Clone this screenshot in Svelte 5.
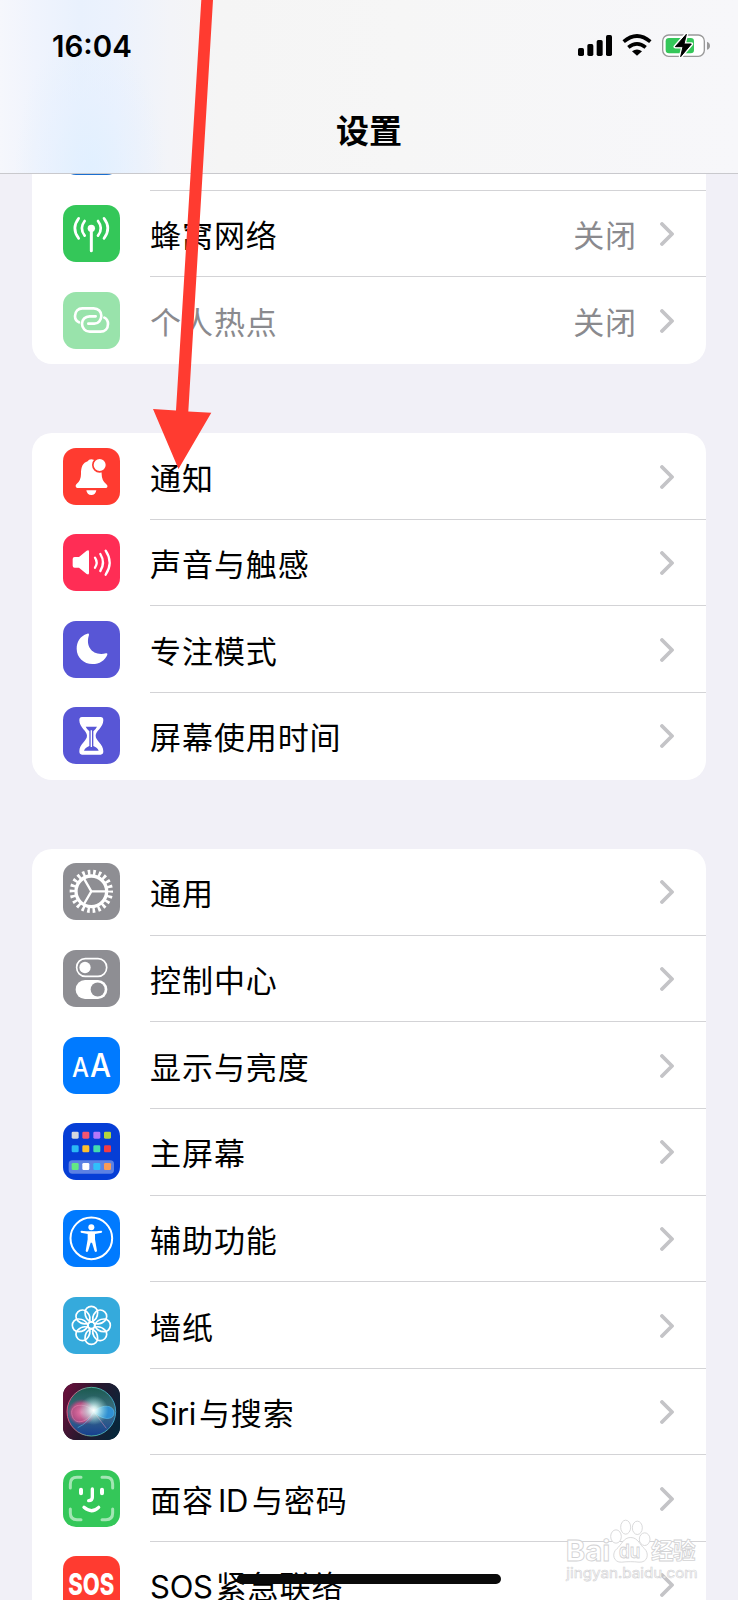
<script lang="ts">
  type Row = { icon: string; label: string; color: string; value?: string; disabled?: boolean }

  const groups: Row[][] = [
    [
      { icon: 'bluetooth', label: '', color: '#1a6fd0' },
      { icon: 'cellular', label: '蜂窝网络', color: '#34c759', value: '关闭' },
      { icon: 'hotspot', label: '个人热点', color: '#34c759', value: '关闭', disabled: true },
    ],
    [
      { icon: 'bell', label: '通知', color: '#ff3b30' },
      { icon: 'sound', label: '声音与触感', color: '#ff2d55' },
      { icon: 'moon', label: '专注模式', color: '#5856d6' },
      { icon: 'hourglass', label: '屏幕使用时间', color: '#5856d6' },
    ],
    [
      { icon: 'gear', label: '通用', color: '#8e8e93' },
      { icon: 'toggles', label: '控制中心', color: '#8e8e93' },
      { icon: 'display', label: '显示与亮度', color: '#007aff' },
      { icon: 'home', label: '主屏幕', color: '#063ed6' },
      { icon: 'access', label: '辅助功能', color: '#007aff' },
      { icon: 'flower', label: '墙纸', color: '#35aadc' },
      { icon: 'siri', label: 'Siri与搜索', color: '#20182f' },
      { icon: 'face', label: '面容ID与密码', color: '#34c759' },
      { icon: 'sos', label: 'SOS紧急联络', color: '#ff3b30' },
    ],
  ]

  const apps = [
    ['#d5d6de', '#f45571', '#b377fa', '#b1d63f'],
    ['#2ab8f5', '#fdc02f', '#43dcae', '#f33b45'],
    ['#63e983', '#ffffff', '#31c0fa', '#fb9b55'],
  ]
  const appX = [26, 58, 91, 123]
  const appY = [26, 67, 120]
  const petals = [0, 45, 90, 135, 180, 225, 270, 315]

  // splits "Siri与搜索" into latin and CJK runs so each gets its own spacing
  const runs = (s: string) => s.match(/[A-Za-z]+|[^A-Za-z]+/g) ?? []
</script>

<div class="screen">
  <header>
    <div class="status">
      <span class="time">16:04</span>
      <svg class="indicators" viewBox="0 0 396 75">
        <rect x="0" y="45" width="18" height="24" rx="5" />
        <rect x="28" y="33" width="18" height="36" rx="5" />
        <rect x="56" y="21" width="18" height="48" rx="5" />
        <rect x="84" y="6" width="18" height="63" rx="5" />
        <path d="M137 26Q177-8 217 26M151 43Q177 22 203 43" fill="none" stroke="#000" stroke-width="11" />
        <path d="M162 55Q177 44 192 55L177 68Z" />
        <rect x="254" y="6" width="125" height="64" rx="18" fill="#fff" stroke="#999" stroke-width="4" />
        <path d="M387 26q9 3 9 12t-9 12z" fill="#999" />
        <rect x="263" y="15" width="85" height="46" rx="10" fill="#34c759" />
        <path d="M325 4L292 41H315L308 71L340 33H318Z" stroke="#fff" stroke-width="11" stroke-linejoin="round" />
        <path d="M325 4L292 41H315L308 71L340 33H318Z" stroke="#000" stroke-width="3" stroke-linejoin="round" />
      </svg>
    </div>
    <h1>设置</h1>
  </header>

  <main>
    {#each groups as rows}
      <section>
        {#each rows as row}
          <div class="row" class:disabled={row.disabled}>
            <svg class="icon" viewBox="0 0 171 171" style="background:{row.color}">
              {#if row.icon === 'cellular'}
                <circle cx="85" cy="70" r="11" fill="#fff" />
                <path class="line" stroke-width="9" d="M85 72V137" />
                <path class="line" stroke-width="8" d="M65 48Q48 70 65 92M105 48Q122 70 105 92M47 40Q24 70 47 100M123 40Q146 70 123 100" />
              {:else if row.icon === 'hotspot'}
                <path class="line" stroke-width="8" d="M48 91C39 87 36 80 36 72C36 58 46 49 58 49H92C106 49 115 59 115 71C115 84 106 95 94 95H76" />
                <path class="line" stroke-width="8" d="M98 73H80C66 73 57 83 57 95C57 108 67 119 80 119H112C126 119 135 109 135 96C135 88 132 81 124 77" />
              {:else if row.icon === 'bell'}
                <path fill="#fff" d="M42 120Q35 116 40 109Q54 98 54 78C54 56 60 44 74 40Q77 34 85 34Q93 34 96 40C110 44 116 56 116 78Q116 98 130 109Q137 116 130 120ZM70 127H100Q98 141 85 141Q72 141 70 127Z" />
                <circle cx="110" cy="51" r="20.5" fill="#fff" stroke="#ff3b30" stroke-width="5" />
              {:else if row.icon === 'sound'}
                <path fill="#fff" d="M29 75q0-6 6-6H48L71 50Q78 46 78 53V117Q78 124 71 120L48 101H35q-6 0-6-6Z" />
                <path class="line" stroke-width="7" d="M96 71Q106 86 96 101M112 60Q128 86 112 111M128 50Q152 86 128 122" />
              {:else if row.icon === 'moon'}
                <path fill="#fff" d="M73 38C50 45 41 63 41 83C41 110 63 129 88 129C110 129 126 118 133 101Q134 96 129 97C90 106 66 78 78 42Q79 37 73 38Z" />
              {:else if row.icon === 'hourglass'}
                <path fill="#fff" d="M57 30H113Q121 30 121 40C121 62 98 72 98 86C98 102 121 110 121 133Q121 143 113 143H57Q49 143 49 133C49 110 72 102 72 86C72 72 49 62 49 40Q49 30 57 30Z" />
                <path fill="#5856d6" d="M68 59H102Q98 67 91 73V117Q104 122 107 131H63Q66 122 79 117V73Q72 67 68 59Z" />
                <path stroke="#fff" stroke-width="4" d="M85 70V120" />
              {:else if row.icon === 'gear'}
                <circle cx="85" cy="85" r="56" fill="none" stroke="#fff" stroke-width="18" pathLength="44" stroke-dasharray=".95 1.05" stroke-dashoffset=".475" />
                <circle cx="85" cy="85" r="46" fill="none" stroke="#fff" stroke-width="10" />
                <path class="line" stroke-width="7" d="M85 85H129M85 85L63 47M85 85L63 123" />
              {:else if row.icon === 'toggles'}
                <rect x="41" y="26" width="90" height="53" rx="26" fill="none" stroke="#fff" stroke-width="5" />
                <circle cx="66" cy="52.5" r="17" fill="#fff" />
                <rect x="38" y="90" width="95" height="57" rx="28" fill="#fff" />
                <circle cx="104" cy="118.5" r="21" fill="#8e8e93" />
              {:else if row.icon === 'display'}
                <text x="27" y="121" font-size="81" font-weight="500" textLength="51" lengthAdjust="spacingAndGlyphs">A</text>
                <text x="81" y="121" font-size="99" font-weight="500" textLength="63" lengthAdjust="spacingAndGlyphs">A</text>
              {:else if row.icon === 'home'}
                <rect x="17" y="112" width="136" height="40" rx="11" fill="#fff" opacity=".35" />
                {#each apps as line, r}
                  {#each line as fill, c}
                    <rect x={appX[c]} y={appY[r]} width="21" height="21" rx="4" {fill} />
                  {/each}
                {/each}
              {:else if row.icon === 'access'}
                <circle cx="85" cy="85" r="62.5" fill="none" stroke="#fff" stroke-width="6" />
                <circle cx="85" cy="52" r="9" fill="#fff" />
                <path fill="#fff" d="M55 62Q85 66 115 62Q120 64 116 68L96 72V88L102 123Q99 129 95 124L87 98H83L75 124Q71 129 68 123L74 88V72L54 68Q50 64 55 62Z" />
              {:else if row.icon === 'flower'}
                <circle class="line" stroke-width="5" cx="85" cy="85" r="10" />
                {#each petals as angle}
                  <path class="line" stroke-width="5" transform="rotate({angle} 85 85)" d="M85 75C72 70 66 57 66 46A19 18 0 0 1 104 46C104 57 98 70 85 75Z" />
                {/each}
              {:else if row.icon === 'siri'}
                <defs>
                  <linearGradient id="siriBg" x1="0" y1=".3" x2="1" y2=".7">
                    <stop offset="0" stop-color="#64103a" />
                    <stop offset=".45" stop-color="#29182e" />
                    <stop offset="1" stop-color="#07263a" />
                  </linearGradient>
                  <linearGradient id="siriOrb" x1="0" y1="0" x2="0" y2="1">
                    <stop offset="0" stop-color="#1b5a4e" />
                    <stop offset=".5" stop-color="#3f6f86" />
                    <stop offset="1" stop-color="#153f90" />
                  </linearGradient>
                  <linearGradient id="siriRim" x1="0" y1="0" x2="1" y2="0">
                    <stop offset="0" stop-color="#e0507f" />
                    <stop offset=".5" stop-color="#4fae97" />
                    <stop offset="1" stop-color="#3d9fc8" />
                  </linearGradient>
                  <radialGradient id="siriGlow">
                    <stop offset="0" stop-color="#fff" />
                    <stop offset=".25" stop-color="#e4fffb" stop-opacity=".85" />
                    <stop offset="1" stop-color="#9fe8e0" stop-opacity="0" />
                  </radialGradient>
                  <radialGradient id="siriPink">
                    <stop offset="0" stop-color="#e878aa" />
                    <stop offset=".7" stop-color="#d04a84" stop-opacity=".8" />
                    <stop offset="1" stop-color="#a83a78" stop-opacity="0" />
                  </radialGradient>
                </defs>
                <rect width="171" height="171" fill="url(#siriBg)" />
                <circle cx="85" cy="86" r="73" fill="url(#siriOrb)" stroke="url(#siriRim)" stroke-width="3" />
                <ellipse cx="56" cy="88" rx="42" ry="40" fill="url(#siriPink)" />
                <path fill="#2f96e0" opacity=".85" d="M92 86C112 66 150 62 153 88C154 112 120 114 92 86Z" />
                <path fill="none" stroke="#f39ac0" stroke-width="2" opacity=".7" d="M92 86C70 58 26 62 26 88C28 130 70 122 92 86L130 136" />
                <path fill="none" stroke="#64c8f4" stroke-width="2" opacity=".8" d="M92 86C112 66 150 62 153 88C154 112 120 114 92 86Q76 120 44 134" />
                <circle cx="92" cy="82" r="44" fill="url(#siriGlow)" />
              {:else if row.icon === 'face'}
                <path class="line" stroke-width="9" opacity=".55" d="M22 54V42Q22 22 42 22H54M117 22H129Q149 22 149 42V54M149 117V129Q149 149 129 149H117M54 149H42Q22 149 22 129V117" />
                <path class="line" stroke-width="12" d="M54 59V70M117 59V70" />
                <path class="line" stroke-width="10" d="M88 57V82Q88 92 77 92M63 112Q86 132 107 112" />
              {:else if row.icon === 'sos'}
                <text x="16" y="117" font-size="88" font-weight="800" textLength="138" lengthAdjust="spacingAndGlyphs">SOS</text>
              {/if}
            </svg>
            <div class="body">
              <span class="label">{#each runs(row.label) as run}<span class:latin={/[A-Z]/.test(run)}>{run}</span>{/each}</span>
              {#if row.value}<span class="value">{row.value}</span>{/if}
              <svg class="chevron" viewBox="0 0 14 24"><path d="M2 2L12 12L2 22" /></svg>
            </div>
          </div>
        {/each}
      </section>
    {/each}
  </main>

  <svg class="watermark" viewBox="0 0 420 200">
    <text x="2" y="128" font-size="86" font-weight="700" textLength="134" lengthAdjust="spacingAndGlyphs">Bai</text>
    <ellipse cx="153" cy="55" rx="16" ry="20" />
    <ellipse cx="182" cy="27" rx="15" ry="21" />
    <ellipse cx="217" cy="29" rx="15" ry="20" />
    <ellipse cx="239" cy="63" rx="16" ry="19" />
    <path d="M197 58C175 58 170 80 156 91C138 106 146 134 170 132C188 130 204 130 222 132C248 134 254 106 238 91C224 80 219 58 197 58Z" />
    <text x="162" y="121" font-size="56" font-weight="600" textLength="64" lengthAdjust="spacingAndGlyphs">du</text>
    <text x="258" y="124" font-size="68" font-weight="700" textLength="134">经验</text>
    <text class="url" x="4" y="180" font-size="44" textLength="394" lengthAdjust="spacingAndGlyphs">jingyan.baidu.com</text>
  </svg>

  <svg class="arrow" viewBox="0 0 240 480">
    <path d="M201.3 0H213L188.3 411.4L211.3 412.7L178.5 469L153 409L176 410.5Z" />
  </svg>
  <div class="home-bar"></div>
</div>

<style>
  :global(body) { margin: 0; }
  .screen {
    position: relative; display: flex; flex-direction: column;
    width: 738px; height: 1600px; overflow: hidden;
    background: #f1f0f7; color: #000;
    font-family: Inter, "Noto Sans CJK SC", sans-serif;
  }
  header {
    flex: none; box-sizing: border-box; height: 174px;
    border-bottom: 1px solid #c9c9cd;
    background:
      radial-gradient(ellipse 75px 150px at 90px 175px, #e1f0ff, #e4f0ff80 50%, transparent),
      linear-gradient(90deg, #f6f7fc, #f0f4fd 35px, #e9f1fd 80px, #ecf2fd 115px, #f3f4f8 170px, #f5f5f5 220px, #f6f6f6 400px, #f7f7fa);
  }
  .status { display: flex; justify-content: space-between; align-items: center; height: 91px; padding: 0 28px 0 52px; }
  .time { font-size: 29.5px; font-weight: 600; letter-spacing: 0; }
  .indicators { width: 132px; height: 25px; }
  h1 { margin: 17px 0 0; font-size: 33px; line-height: 47px; font-weight: 700; text-align: center; }

  main { flex: 1; min-height: 0; overflow: hidden; display: flex; flex-direction: column; gap: 69.1px; padding: 0 32px; }
  section { flex: none; background: #fff; border-radius: 20px; overflow: hidden; }
  section:first-child { margin-top: -69.9px; }
  .row { display: flex; align-items: center; height: 86.67px; padding-left: 31.3px; }
  .icon { flex: none; width: 57px; height: 57px; border-radius: 13px; margin: -1px 29.8px 0 0; }
  .icon text { fill: #fff; }
  .line { fill: none; stroke: #fff; stroke-linecap: round; stroke-linejoin: round; }
  .body {
    flex: 1; display: flex; align-items: center; box-sizing: border-box; height: 100%;
    padding-right: 32.5px; border-bottom: 1px solid #d3d3d6; font-size: 31px;
  }
  .row:last-child .body { border-bottom-color: transparent; }
  .label { flex: 1; white-space: nowrap; letter-spacing: .9px; }
  .latin { letter-spacing: -.3px; margin-right: 3px; }
  .label span + .latin { margin: 0 4px; }
  .value { color: #8a8a8e; letter-spacing: .9px; margin-right: 22.5px; }
  .chevron { width: 14px; height: 24px; margin-top: 1px; }
  .chevron path { fill: none; stroke: #c4c4c7; stroke-width: 3.8; stroke-linecap: round; stroke-linejoin: round; }
  .disabled .icon { opacity: .5; }
  .disabled .label { color: #8a8a8e; }

  .watermark { position: absolute; left: 565px; top: 1518px; width: 140px; height: 67px; }
  .watermark * { fill: #fff; stroke: #d2d2d4; stroke-width: 2.5; }
  .watermark .url { stroke-width: 1.8; }
  .arrow { position: absolute; left: 0; top: 0; width: 240px; height: 480px; fill: #ff3b30; }
  .home-bar { position: absolute; left: 237px; top: 1574px; width: 264px; height: 10px; border-radius: 5px; background: #0a0a0a; }
</style>
